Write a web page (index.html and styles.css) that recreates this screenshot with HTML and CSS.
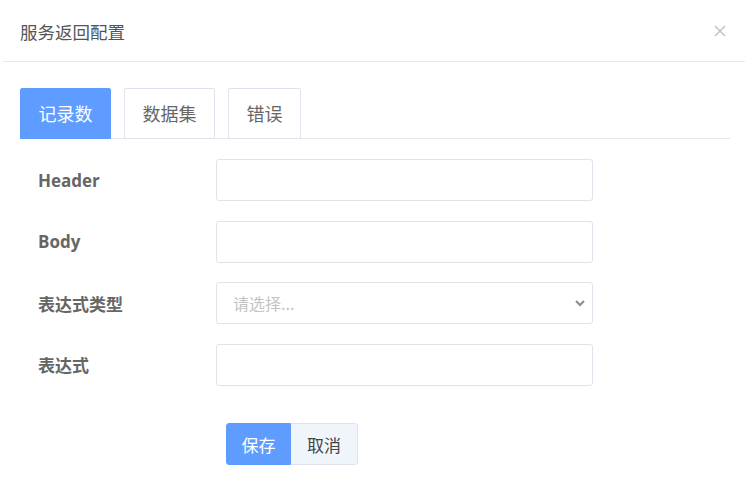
FILE: index.html
```html
<!DOCTYPE html>
<html lang="zh-CN">
<head>
    <meta charset="UTF-8">
    <title>服务返回配置</title>
    <link rel="stylesheet" href="styles.css">
</head>
<body>
    <div class="dialog">
        <div class="dialog-header">
            <span class="dialog-title">服务返回配置</span>
            <svg class="dialog-close" width="12" height="12" viewBox="0 0 12 12">
                <path d="M1 1 L11 11 M11 1 L1 11" stroke="#c4c4c4" stroke-width="1.6"/>
            </svg>
        </div>
        <div class="dialog-body">
            <div class="tabs">
                <div class="tab active">记录数</div>
                <div class="tab">数据集</div>
                <div class="tab">错误</div>
            </div>
            <div class="form">
                <div class="form-row">
                    <label class="form-label" for="header">Header</label>
                    <input class="form-input" type="text" id="header">
                </div>
                <div class="form-row">
                    <label class="form-label" for="body">Body</label>
                    <input class="form-input" type="text" id="body">
                </div>
                <div class="form-row">
                    <label class="form-label" for="exprType">表达式类型</label>
                    <div class="select-wrap">
                        <select class="form-input form-select" id="exprType">
                            <option value="">请选择...</option>
                        </select>
                        <svg class="select-arrow" width="10" height="8" viewBox="0 0 10 8">
                            <path d="M1 2 L5 6 L9 2" fill="none" stroke="#8a8a8a" stroke-width="2"/>
                        </svg>
                    </div>
                </div>
                <div class="form-row">
                    <label class="form-label" for="expr">表达式</label>
                    <input class="form-input" type="text" id="expr">
                </div>
                <div class="form-actions">
                    <button class="btn btn-primary">保存</button><button class="btn btn-default">取消</button>
                </div>
            </div>
        </div>
    </div>
</body>
</html>
```

FILE: styles.css
```css
body {
    margin: 0;
    background: #fff;
    font-family: "Noto Sans CJK SC", "Open Sans", sans-serif;
    color: #606266;
}

.dialog {
    width: 745px;
    height: 489px;
    background: #fff;
}

.dialog-header {
    height: 61px;
    display: flex;
    align-items: center;
    justify-content: space-between;
    padding: 0 19px 0 17px;
    border-bottom: 1px solid #e4e7ef;
    margin-left: 3px;
}

.dialog-title {
    font-size: 17.5px;
    color: #555;
    padding-top: 2px;
}

.dialog-close {
    display: block;
}

.dialog-body {
    padding: 26px 15px 0 20px;
}

.tabs {
    display: flex;
    gap: 13px;
    border-bottom: 1px solid #e4e7ef;
    height: 50px;
}

.tab {
    box-sizing: border-box;
    height: 51px;
    padding: 0 17.5px;
    font-size: 18px;
    line-height: 49px;
    color: #666;
    border: 1px solid #dde2ec;
    border-radius: 2px 2px 0 0;
    background: #fff;
}

.tab.active {
    background: #5e9cff;
    border-color: #5e9cff;
    color: #fff;
}

.form {
    padding: 20px 0 0 18px;
}

.form-row {
    display: flex;
    align-items: center;
    margin-bottom: 19.5px;
}

.form-label {
    width: 178px;
    font-family: "Open Sans", "Noto Sans CJK SC", sans-serif;
    font-weight: bold;
    font-size: 17px;
    color: #666;
}

.form-input {
    box-sizing: border-box;
    width: 377px;
    height: 42px;
    border: 1px solid #dfe3ec;
    border-radius: 3px;
    background: #fff;
    font-family: "Noto Sans CJK SC", sans-serif;
    font-size: 16px;
    padding: 0 16px;
    outline: none;
}

.select-wrap {
    position: relative;
    display: flex;
}

.form-select {
    appearance: none;
    -webkit-appearance: none;
    color: #c3c3c3;
    font-size: 16px;
}

.select-arrow {
    position: absolute;
    right: 8px;
    top: 17px;
}

.form-actions {
    display: flex;
    padding: 18px 0 0 188px;
}

.btn {
    box-sizing: border-box;
    height: 42px;
    width: 65px;
    border: 1px solid #dfe3ec;
    font-family: "Noto Sans CJK SC", sans-serif;
    font-size: 17px;
    cursor: pointer;
}

.btn-primary {
    background: #5e9cff;
    border-color: #5e9cff;
    color: #fff;
    border-radius: 3px 0 0 3px;
}

.btn-default {
    width: 67px;
    background: #f0f4fb;
    color: #444;
    border-left: none;
    border-radius: 0 3px 3px 0;
}
```
